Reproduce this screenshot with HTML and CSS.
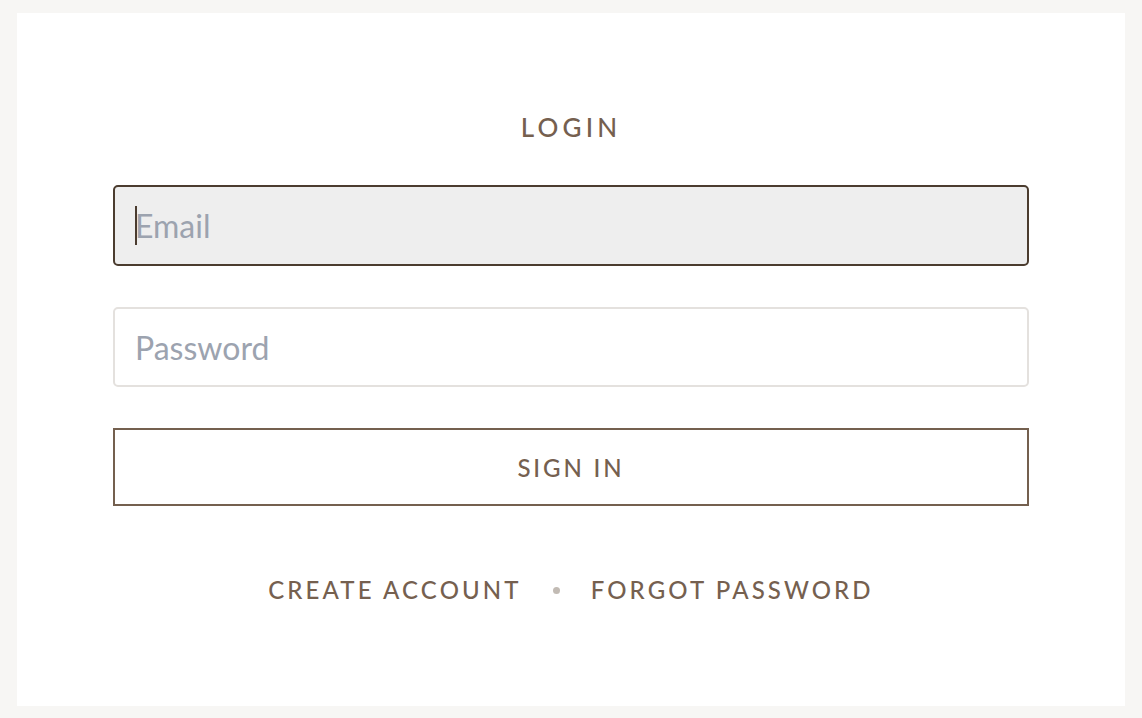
FILE: index.html
```html
<!DOCTYPE html>
<html lang="en">
<head>
    <meta charset="UTF-8">
    <meta name="viewport" content="width=device-width, initial-scale=1.0">
    <title>Login</title>
    <link rel="stylesheet" href="styles.css">
</head>
<body>
    <main class="card">
        <h1 class="title">Login</h1>
        <form class="login-form" onsubmit="return false">
            <div class="field-wrap">
                <input class="field field-focus" type="email" placeholder="Email" autofocus>
                <span class="caret"></span>
            </div>
            <input class="field" type="password" placeholder="Password">
            <button class="btn" type="submit">Sign in</button>
        </form>
        <nav class="links">
            <a href="#">Create account</a>
            <span class="dot"></span>
            <a href="#">Forgot password</a>
        </nav>
    </main>
</body>
</html>
```

FILE: styles.css
```css
body {
    margin: 0;
    padding: 13px 17px 12px;
    background-color: #f7f6f4;
    font-family: Lato, "Liberation Sans", sans-serif;
    color: #7a6554;
}

.card {
    height: 693px;
    box-sizing: border-box;
    background-color: #fff;
    padding: 98px 96px 0;
    display: flex;
    flex-direction: column;
    align-items: center;
}

.title {
    margin: 0;
    font-size: 26px;
    line-height: 32px;
    font-weight: 500;
    letter-spacing: 0.16em;
    text-transform: uppercase;
    color: #75604f;
}

.login-form {
    width: 100%;
    margin-top: 42px;
    display: flex;
    flex-direction: column;
    gap: 41px;
}

.field-wrap {
    position: relative;
    display: flex;
    flex-direction: column;
}

.field {
    height: 80px;
    box-sizing: border-box;
    padding: 0 21px 0 20px;
    border: 2px solid #e4e1de;
    border-radius: 5px;
    background-color: #fff;
    font-family: inherit;
    font-size: 32px;
    color: #4a3b2f;
    caret-color: transparent;
    outline: none;
}

.field::placeholder {
    color: #9ca3af;
}

.field-focus,
.field:focus {
    height: 81px;
    border-color: #4b3c2f;
    background-color: #eeeeee;
}

.caret {
    position: absolute;
    left: 22px;
    top: 21px;
    width: 2px;
    height: 39px;
    background-color: #4a3b2f;
}

.btn {
    height: 78px;
    border: 2px solid #74604f;
    background-color: #fff;
    font-family: inherit;
    font-size: 24px;
    font-weight: 500;
    letter-spacing: 0.12em;
    text-transform: uppercase;
    color: #75604f;
    cursor: pointer;
}

.links {
    margin-top: 69px;
    display: flex;
    align-items: center;
    gap: 31px;
    font-size: 24px;
    line-height: 30px;
    letter-spacing: 0.13em;
    text-transform: uppercase;
}

.links a {
    color: #75604f;
    text-decoration: none;
    font-weight: 500;
}

.dot {
    width: 7px;
    height: 7px;
    border-radius: 50%;
    background-color: #c2bbb4;
}
```
